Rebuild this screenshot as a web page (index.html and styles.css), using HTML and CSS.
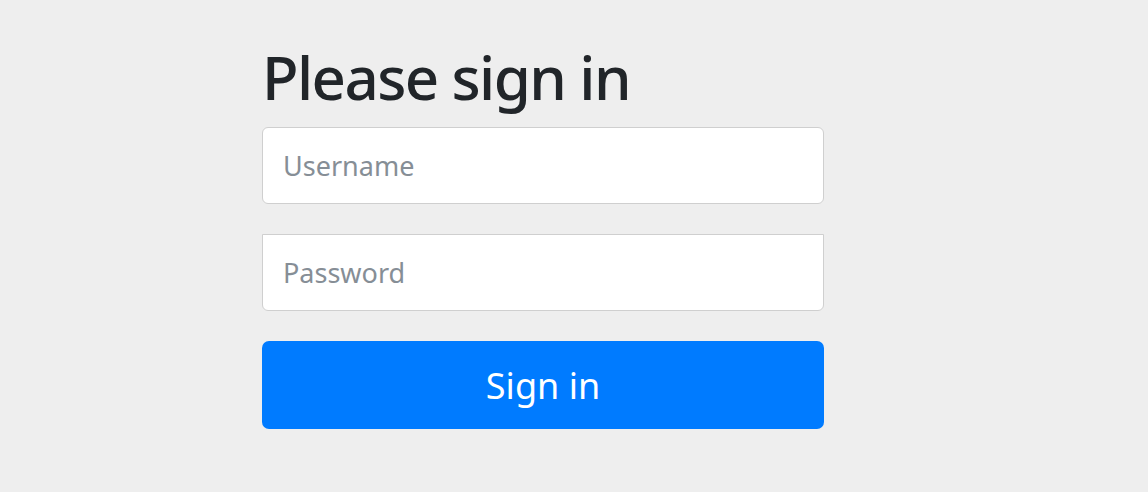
FILE: index.html
```html
<!DOCTYPE html>
<html lang="en">
<head>
<meta charset="utf-8">
<title>Please sign in</title>
<link rel="stylesheet" href="styles.css">
</head>
<body>
<div class="container">
  <form class="form-signin">
    <h2 class="heading">Please sign in</h2>
    <input class="field field-user" type="text" placeholder="Username">
    <input class="field field-pass" type="password" placeholder="Password">
    <button class="btn" type="submit">Sign in</button>
  </form>
</div>
</body>
</html>
```

FILE: styles.css
```css
html, body {
  margin: 0;
  padding: 0;
  background: #eeeeee;
  height: 100%;
}
body {
  font-family: "Noto Sans", "Open Sans", sans-serif;
  color: #212529;
}
.container {
  padding-left: 262px;
  padding-top: 41px;
}
.form-signin {
  width: 562px;
  display: flex;
  flex-direction: column;
}
.heading {
  margin: 0 0 14px 0;
  font-size: 60px;
  font-weight: 500;
  line-height: 72px;
  letter-spacing: -1.6px;
}
.field {
  box-sizing: border-box;
  width: 100%;
  height: 77px;
  margin: 0 0 30px 0;
  padding: 0 20px;
  font-family: inherit;
  font-size: 27px;
  color: #495057;
  background: #fff;
  border: 1px solid #cfcfcf;
  border-radius: 6px;
  outline: none;
}
.field::placeholder {
  color: #868e96;
}
.field-pass {
  border-top-left-radius: 0;
  border-top-right-radius: 0;
}
.btn {
  box-sizing: border-box;
  width: 100%;
  height: 88px;
  border: none;
  border-radius: 7px;
  background: #007bff;
  color: #fff;
  font-family: inherit;
  font-size: 36px;
  cursor: pointer;
}
```
